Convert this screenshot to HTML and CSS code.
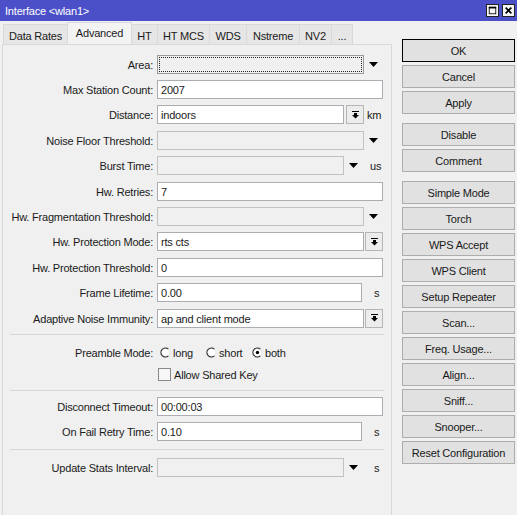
FILE: index.html
```html
<!DOCTYPE html>
<html lang="en">
<head>
    <meta charset="UTF-8">
    <title>Interface &lt;wlan1&gt;</title>
    <link rel="stylesheet" href="styles.css">
</head>
<body>
    <div class="window">
        <div class="titlebar">
            <span class="title">Interface &lt;wlan1&gt;</span>
            <div class="tb-buttons">
                <span class="tb-btn">
                    <svg width="11" height="11" viewBox="0 0 11 11"><rect x="1.5" y="1.5" width="8" height="8" fill="none" stroke="#000"/><rect x="1" y="1" width="9" height="2" fill="#000"/></svg>
                </span>
                <span class="tb-btn">
                    <svg width="11" height="11" viewBox="0 0 11 11"><path d="M2 2 L9 9 M9 2 L2 9" stroke="#000" stroke-width="2"/></svg>
                </span>
            </div>
        </div>

        <div class="content">
            <div class="main">
                <div class="tabs">
                    <div class="tab t1">Data Rates</div>
                    <div class="tab t2 active">Advanced</div>
                    <div class="tab t3">HT</div>
                    <div class="tab t4">HT MCS</div>
                    <div class="tab t5">WDS</div>
                    <div class="tab t6">Nstreme</div>
                    <div class="tab t7">NV2</div>
                    <div class="tab t8">...</div>
                </div>

                <div class="panel">
                    <div class="section first">
                        <div class="row">
                            <span class="lbl">Area:</span>
                            <div class="field off focus w-combo"></div>
                            <span class="drop"><svg width="9" height="5" viewBox="0 0 9 5"><path d="M0 0 H9 L4.5 5 Z" fill="#000"/></svg></span>
                        </div>
                        <div class="row">
                            <span class="lbl">Max Station Count:</span>
                            <div class="field w-full">2007</div>
                        </div>
                        <div class="row">
                            <span class="lbl">Distance:</span>
                            <div class="field w-short">indoors</div>
                            <span class="pick narrow"><svg width="7" height="8" viewBox="0 0 7 8"><rect x="0" y="0" width="7" height="1" fill="#000"/><rect x="2" y="2" width="3" height="2" fill="#000"/><path d="M0 4 H7 L3.5 7.5 Z" fill="#000"/></svg></span>
                            <span class="unit u-km">km</span>
                        </div>
                        <div class="row">
                            <span class="lbl">Noise Floor Threshold:</span>
                            <div class="field off w-combo"></div>
                            <span class="drop"><svg width="9" height="5" viewBox="0 0 9 5"><path d="M0 0 H9 L4.5 5 Z" fill="#000"/></svg></span>
                        </div>
                        <div class="row">
                            <span class="lbl">Burst Time:</span>
                            <div class="field off w-short"></div>
                            <span class="drop"><svg width="9" height="5" viewBox="0 0 9 5"><path d="M0 0 H9 L4.5 5 Z" fill="#000"/></svg></span>
                            <span class="unit u-us">us</span>
                        </div>
                        <div class="row">
                            <span class="lbl">Hw. Retries:</span>
                            <div class="field w-full">7</div>
                        </div>
                        <div class="row">
                            <span class="lbl">Hw. Fragmentation Threshold:</span>
                            <div class="field off w-combo"></div>
                            <span class="drop"><svg width="9" height="5" viewBox="0 0 9 5"><path d="M0 0 H9 L4.5 5 Z" fill="#000"/></svg></span>
                        </div>
                        <div class="row">
                            <span class="lbl">Hw. Protection Mode:</span>
                            <div class="field w-combo">rts cts</div>
                            <span class="pick"><svg width="7" height="8" viewBox="0 0 7 8"><rect x="0" y="0" width="7" height="1" fill="#000"/><rect x="2" y="2" width="3" height="2" fill="#000"/><path d="M0 4 H7 L3.5 7.5 Z" fill="#000"/></svg></span>
                        </div>
                        <div class="row">
                            <span class="lbl">Hw. Protection Threshold:</span>
                            <div class="field w-full">0</div>
                        </div>
                        <div class="row">
                            <span class="lbl">Frame Lifetime:</span>
                            <div class="field w-unit">0.00</div>
                            <span class="unit u-s">s</span>
                        </div>
                        <div class="row">
                            <span class="lbl">Adaptive Noise Immunity:</span>
                            <div class="field w-combo">ap and client mode</div>
                            <span class="pick"><svg width="7" height="8" viewBox="0 0 7 8"><rect x="0" y="0" width="7" height="1" fill="#000"/><rect x="2" y="2" width="3" height="2" fill="#000"/><path d="M0 4 H7 L3.5 7.5 Z" fill="#000"/></svg></span>
                        </div>
                    </div>

                    <div class="sep sep1"></div>

                    <div class="section">
                        <div class="row small">
                            <span class="lbl">Preamble Mode:</span>
                            <label class="radio r-long">
                                <svg width="11" height="11" viewBox="0 0 11 11"><circle cx="5.5" cy="5.5" r="4.5" fill="#fff" stroke="#e3e3e3"/><path d="M8.4 2.1 A4.5 4.5 0 1 0 8.4 8.9" fill="none" stroke="#333" stroke-width="1.2"/></svg>
                                long
                            </label>
                            <label class="radio r-short">
                                <svg width="11" height="11" viewBox="0 0 11 11"><circle cx="5.5" cy="5.5" r="4.5" fill="#fff" stroke="#e3e3e3"/><path d="M8.4 2.1 A4.5 4.5 0 1 0 8.4 8.9" fill="none" stroke="#333" stroke-width="1.2"/></svg>
                                short
                            </label>
                            <label class="radio">
                                <svg width="11" height="11" viewBox="0 0 11 11"><circle cx="5.5" cy="5.5" r="4.5" fill="#fff" stroke="#e3e3e3"/><path d="M8.4 2.1 A4.5 4.5 0 1 0 8.4 8.9" fill="none" stroke="#333" stroke-width="1.2"/><circle cx="5.5" cy="5.5" r="1.7" fill="#000"/></svg>
                                both
                            </label>
                        </div>
                        <div class="row small">
                            <span class="lbl"></span>
                            <label class="check"><span class="box"></span>Allow Shared Key</label>
                        </div>
                    </div>

                    <div class="sep sep2"></div>

                    <div class="section">
                        <div class="row">
                            <span class="lbl">Disconnect Timeout:</span>
                            <div class="field w-full">00:00:03</div>
                        </div>
                        <div class="row">
                            <span class="lbl">On Fail Retry Time:</span>
                            <div class="field w-unit">0.10</div>
                            <span class="unit u-s">s</span>
                        </div>
                    </div>

                    <div class="sep sep3"></div>

                    <div class="section">
                        <div class="row">
                            <span class="lbl">Update Stats Interval:</span>
                            <div class="field off w-short"></div>
                            <span class="drop"><svg width="9" height="5" viewBox="0 0 9 5"><path d="M0 0 H9 L4.5 5 Z" fill="#000"/></svg></span>
                            <span class="unit u-s2">s</span>
                        </div>
                    </div>
                </div>
            </div>

            <div class="actions">
                <button class="btn default">OK</button>
                <button class="btn">Cancel</button>
                <button class="btn">Apply</button>
                <button class="btn group">Disable</button>
                <button class="btn">Comment</button>
                <button class="btn group">Simple Mode</button>
                <button class="btn">Torch</button>
                <button class="btn">WPS Accept</button>
                <button class="btn">WPS Client</button>
                <button class="btn">Setup Repeater</button>
                <button class="btn">Scan...</button>
                <button class="btn">Freq. Usage...</button>
                <button class="btn">Align...</button>
                <button class="btn">Sniff...</button>
                <button class="btn">Snooper...</button>
                <button class="btn">Reset Configuration</button>
            </div>
        </div>
    </div>
</body>
</html>
```

FILE: styles.css
```css
body {
    margin: 0;
    background-color: #f0f0f0;
    font-family: "Liberation Sans", Arial, sans-serif;
    font-size: 11px;
    letter-spacing: -0.2px;
    color: #1a1a1a;
}
.window {
    width: 517px;
    height: 515px;
    display: flex;
    flex-direction: column;
    overflow: hidden;
}
.titlebar {
    height: 21px;
    flex: none;
    display: flex;
    align-items: center;
    justify-content: space-between;
    padding: 0 2px 0 5px;
    background-color: #4c50c8;
    color: #fff;
}
.tb-buttons {
    display: flex;
    gap: 3px;
}
.tb-btn {
    width: 13px;
    height: 13px;
    box-sizing: border-box;
    border: 1px solid #222;
    background-color: #f4f4f4;
    display: flex;
    justify-content: center;
    align-items: center;
}
.tb-btn svg {
    width: 9px;
    height: 9px;
}
.content {
    flex: 1;
    display: flex;
    min-height: 0;
}
.main {
    width: 390px;
    padding-left: 2px;
    display: flex;
    flex-direction: column;
}
.tabs {
    height: 24px;
    display: flex;
    align-items: flex-end;
    padding-left: 1px;
    margin-bottom: -1px;
}
.tab {
    height: 21px;
    box-sizing: border-box;
    border: 1px solid #d9d9d9;
    background-color: #e6e6e6;
    text-align: center;
    line-height: 22px;
    margin-left: -1px;
    white-space: nowrap;
}
.tab.t1 { width: 65px; margin-left: 0; }
.tab.t2 { width: 65px; }
.tab.t3 { width: 27px; }
.tab.t4 { width: 53px; }
.tab.t5 { width: 38px; }
.tab.t6 { width: 54px; }
.tab.t7 { width: 33px; }
.tab.t8 { width: 22px; }
.tab.active {
    height: 23px;
    line-height: 20px;
    background-color: #f3f3f3;
    border-color: #d9d9d9;
    border-bottom-color: #f0f0f0;
}
.panel {
    flex: 1;
    border: 1px solid #d9d9d9;
    border-bottom: none;
    padding-top: 6.5px;
}
.row {
    height: 25.4px;
    display: flex;
    align-items: center;
}
.row.small {
    height: 22px;
}
.lbl {
    width: 150px;
    margin-right: 4px;
    flex: none;
    text-align: right;
    white-space: nowrap;
    padding-top: 1px;
}
.field {
    height: 19px;
    box-sizing: border-box;
    border: 1px solid #abadb3;
    background-color: #fff;
    padding: 1px 3px 0;
    line-height: 17px;
    white-space: nowrap;
}
.field.off {
    background-color: #f0f0f0;
    border-color: #c2c2c2;
}
.field.focus {
    border-color: #9a9a9a;
    outline: 1px dotted #222;
    outline-offset: -3px;
}
.w-full { width: 226px; }
.w-combo { width: 207px; }
.w-unit { width: 205px; }
.w-short { width: 187px; }
.drop {
    width: 19px;
    display: flex;
    justify-content: center;
}
.pick {
    width: 18px;
    height: 19px;
    margin-left: 1px;
    box-sizing: border-box;
    border: 1px solid #b5b5b5;
    background-color: #ececec;
    display: flex;
    justify-content: center;
    align-items: center;
}
.pick.narrow {
    margin-left: 2px;
}
.unit { padding-top: 1px; }
.unit.u-km { margin-left: 3px; }
.unit.u-us { margin-left: 7px; }
.unit.u-s { margin-left: 12px; }
.unit.u-s2 { margin-left: 11px; }
.sep {
    height: 1px;
    background-color: #d6d6d6;
    margin: 0 7px;
}
.sep1 { margin-top: 3.5px; margin-bottom: 6px; }
.sep2 { margin-top: 5px; margin-bottom: 2.5px; }
.sep3 { margin-top: 4.6px; margin-bottom: 4.3px; }
.radio {
    display: flex;
    align-items: center;
    gap: 2px;
    padding-top: 1px;
}
.radio.r-long {
    width: 46px;
    padding-left: 3px;
}
.radio.r-short {
    width: 46px;
}
.check {
    display: flex;
    align-items: center;
    gap: 3px;
    margin-left: 1px;
    padding-top: 1px;
}
.box {
    width: 13px;
    height: 13px;
    box-sizing: border-box;
    border: 1px solid #8a8a8a;
    background-color: #f7f7f7;
}
.actions {
    width: 113px;
    margin-left: 10px;
    padding-top: 18px;
    display: flex;
    flex-direction: column;
    gap: 3px;
}
.btn {
    height: 23px;
    box-sizing: border-box;
    border: 1px solid #adadad;
    background-color: #e1e1e1;
    font-family: inherit;
    font-size: 11px;
    letter-spacing: -0.2px;
    color: #1a1a1a;
    padding: 0;
}
.btn.default {
    border-color: #000;
}
.btn.group {
    margin-top: 6px;
}
```
